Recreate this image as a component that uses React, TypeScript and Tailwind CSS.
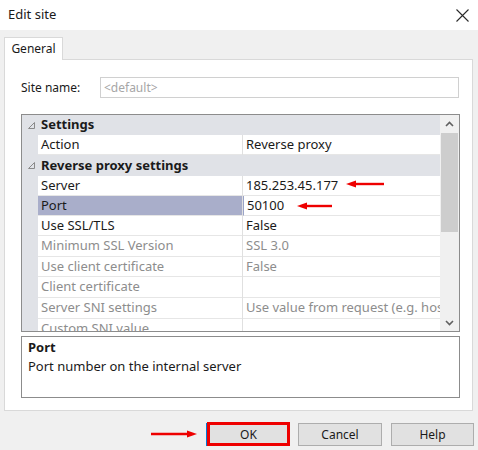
import React from "react";

type Row = {
  name: string;
  value?: string;
  kind?: "header" | "row";
  disabled?: boolean;
  selected?: boolean;
  h: number;
};

const rows: Row[] = [
  { name: "Settings", kind: "header", h: 20 },
  { name: "Action", value: "Reverse proxy", h: 20 },
  { name: "Reverse proxy settings", kind: "header", h: 21 },
  { name: "Server", value: "185.253.45.177", h: 20 },
  { name: "Port", value: "50100", selected: true, h: 20 },
  { name: "Use SSL/TLS", value: "False", h: 20 },
  { name: "Minimum SSL Version", value: "SSL 3.0", disabled: true, h: 21 },
  { name: "Use client certificate", value: "False", disabled: true, h: 20 },
  { name: "Client certificate", value: "", disabled: true, h: 21 },
  { name: "Server SNI settings", value: "Use value from request (e.g. host header)", disabled: true, h: 21 },
  { name: "Custom SNI value", value: "", disabled: true, h: 20 },
];

function Collapse() {
  return (
    <svg width="7" height="7" viewBox="0 0 7 7" className="block">
      <path d="M6.5 0.5 L6.5 6.5 L0.5 6.5 Z" fill="none" stroke="#8a8a8a" strokeWidth="1" />
    </svg>
  );
}

function LeftArrow({ w }: { w: number }) {
  return (
    <svg width={w} height="8" viewBox={`0 0 ${w} 8`} className="block">
      <path d={`M${w} 4 L9 4`} stroke="#ee0000" strokeWidth="2.4" />
      <path d="M0 4 L10 0.5 L10 7.5 Z" fill="#ee0000" />
    </svg>
  );
}

function RightArrow({ w }: { w: number }) {
  return (
    <svg width={w} height="8" viewBox={`0 0 ${w} 8`} className="block">
      <path d={`M0 4 L${w - 9} 4`} stroke="#ee0000" strokeWidth="2.4" />
      <path d={`M${w} 4 L${w - 10} 0.5 L${w - 10} 7.5 Z`} fill="#ee0000" />
    </svg>
  );
}

function Chevron({ up }: { up?: boolean }) {
  return (
    <svg width="9" height="6" viewBox="0 0 9 6" className="block">
      <path
        d={up ? "M1 5 L4.5 1.5 L8 5" : "M1 1 L4.5 4.5 L8 1"}
        fill="none"
        stroke="#606060"
        strokeWidth="1.6"
      />
    </svg>
  );
}

function GridRow({ row }: { row: Row }) {
  if (row.kind === "header") {
    return (
      <div className="flex bg-[#e0e2e7] items-center shrink-0" style={{ height: row.h }}>
        <div className="w-[16px] flex justify-center pl-[2px]">
          <Collapse />
        </div>
        <div className="pl-[3px] font-bold text-[13px] text-[#1a1a1a]">{row.name}</div>
      </div>
    );
  }
  const tone = row.disabled ? "text-[#8d8d8d]" : "text-[#1a1a1a]";
  return (
    <div className="flex shrink-0" style={{ height: row.h }}>
      <div className="w-[16px] bg-[#e0e2e7]" />
      <div
        className={`w-[204px] pl-[3px] flex items-center border-b border-[#e6e6e6] text-[13px] ${tone} ${
          row.selected ? "bg-[#a9aeca]" : "bg-white"
        }`}
      >
        {row.name}
      </div>
      <div className="w-px bg-[#e0e0e0]" />
      <div
        className={`flex-1 min-w-0 pl-[3px] flex items-center border-b border-[#e6e6e6] text-[13px] whitespace-nowrap overflow-hidden ${tone} ${
          row.selected ? "border-l border-l-[#9aa3c7]" : ""
        }`}
      >
        {row.value}
      </div>
    </div>
  );
}

export default function App() {
  return (
    <div
      className="relative w-[478px] h-[450px] bg-[#f0f0f0] flex flex-col text-[#1a1a1a] overflow-hidden"
      style={{ fontFamily: '"Noto Sans", "Open Sans", sans-serif' }}
    >
      {/* title bar */}
      <div className="h-[30px] bg-white flex items-center justify-between pl-[8px] pr-[8px] shrink-0">
        <span className="text-[13px]">Edit site</span>
        <svg width="13" height="13" viewBox="0 0 13 13" className="block mr-[1px]">
          <path d="M0.5 0.5 L12.5 12.5 M12.5 0.5 L0.5 12.5" stroke="#2a2a2a" strokeWidth="1.1" />
        </svg>
      </div>

      <div className="px-[4px] pt-[7px] flex flex-col">
        {/* tab strip */}
        <div className="flex">
          <div className="relative z-10 -mb-px h-[23px] w-[59px] bg-white border border-b-0 border-[#d9d9d9] flex items-center justify-center text-[12px]">
            General
          </div>
        </div>

        {/* tab page */}
        <div className="h-[352px] w-[469px] bg-white border border-[#d9d9d9] pl-[16px] pt-[17px] flex flex-col">
          <div className="flex items-center h-[21px]">
            <span className="w-[79px] text-[12px]">Site name:</span>
            <div className="w-[359px] h-[21px] border border-[#d0d0d0] flex items-center pl-[3px] text-[12px] text-[#a6a6a6]">
              &lt;default&gt;
            </div>
          </div>

          {/* property grid */}
          <div className="mt-[16px] w-[439px] h-[218px] border border-[#8c8c8c] flex">
            <div className="flex-1 min-w-0 overflow-hidden flex flex-col">
              {rows.map((r) => (
                <GridRow key={r.name} row={r} />
              ))}
            </div>
            <div className="w-[19px] bg-[#f0f0f0] flex flex-col">
              <div className="h-[18px] flex items-center justify-center">
                <Chevron up />
              </div>
              <div className="mx-[1px] h-[99px] bg-[#cdcdcd]" />
              <div className="flex-1" />
              <div className="h-[17px] flex items-center justify-center">
                <Chevron />
              </div>
            </div>
          </div>

          {/* description pane */}
          <div className="mt-[4px] w-[439px] h-[62px] border border-[#8c8c8c] pl-[6px] pt-[1px]">
            <div className="text-[13px] font-bold leading-[19px]">Port</div>
            <div className="text-[13px] leading-[19px]">Port number on the internal server</div>
          </div>
        </div>
      </div>

      {/* buttons */}
      <div className="flex justify-end gap-[9px] pr-[4px] pt-[12px]">
        <div className="relative">
          <div className="absolute right-[92px] top-[7px]">
            <RightArrow w={46} />
          </div>
          <div className="w-[83px] h-[23px] bg-[#e1e1e1] border-l-2 border-[#0078d7] flex items-center justify-center text-[12px]">
            OK
          </div>
          <div className="absolute left-[1px] -top-px w-[83px] h-[24px] border-[3px] border-[#ee0000]" />
        </div>
        <div className="w-[84px] h-[23px] bg-[#e1e1e1] border border-[#adadad] flex items-center justify-center text-[12px]">
          Cancel
        </div>
        <div className="w-[83px] h-[23px] bg-[#e1e1e1] border border-[#adadad] flex items-center justify-center text-[12px]">
          Help
        </div>
      </div>

      {/* annotation arrows beside the grid values */}
      <div className="absolute left-[346px] top-[180px]">
        <LeftArrow w={38} />
      </div>
      <div className="absolute left-[297px] top-[202px]">
        <LeftArrow w={35} />
      </div>
    </div>
  );
}
